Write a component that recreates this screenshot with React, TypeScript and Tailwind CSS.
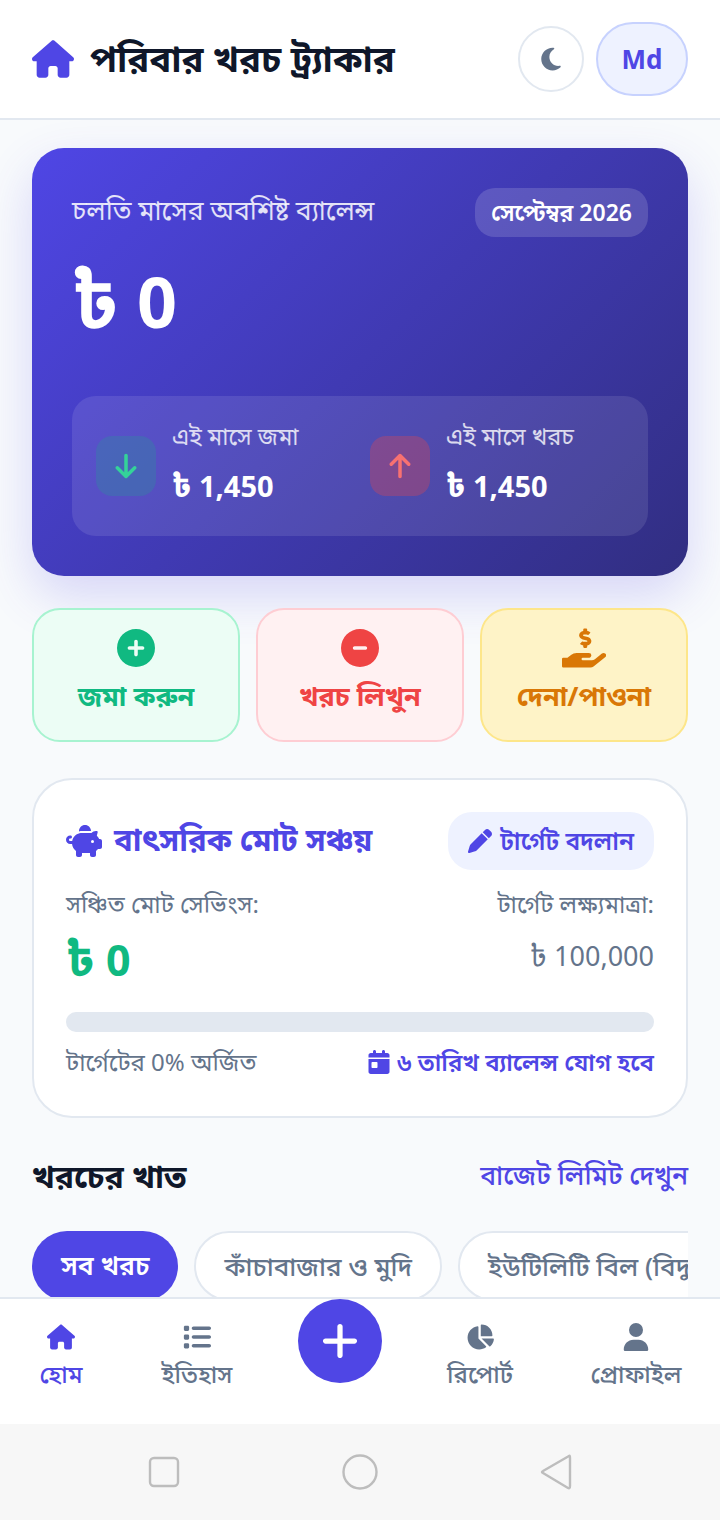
import React from "react";
import {
  FaHouse, FaMoon, FaArrowDown, FaArrowUp, FaCirclePlus, FaCircleMinus,
  FaPiggyBank, FaPen, FaCalendarDay, FaList, FaChartPie, FaUser, FaPlus,
} from "react-icons/fa6";
import { FaHandHoldingUsd } from "react-icons/fa";

const font = "font-['Noto_Sans','Noto_Sans_Bengali','Noto_Serif_Bengali','Lohit_Bengali','FreeSans',sans-serif]";

function Taka() {
  return <span className="text-[1.1em] leading-none">৳</span>;
}

function Stat({ label, tile, icon }: { label: string; tile: string; icon: React.ReactNode }) {
  return (
    <div className="flex items-center gap-4">
      <div className={`flex h-[60px] w-[60px] items-center justify-center rounded-2xl text-[28px] ${tile}`}>{icon}</div>
      <div className="-mt-[6px] flex flex-col">
        <span className="text-[23.5px] leading-[36px] text-white/80">{label}</span>
        <span className="mt-[10px] text-[29px] font-bold leading-[44px] text-white"><Taka /> 1,450</span>
      </div>
    </div>
  );
}

function Action({ box, color, icon, label }: { box: string; color: string; icon: React.ReactNode; label: string }) {
  return (
    <div className={`flex h-[134px] flex-col items-center justify-center gap-[9px] rounded-[28px] border-2 pb-[6px] ${box}`}>
      <div className={`flex h-[38px] items-center text-[38px] leading-none ${color}`}>{icon}</div>
      <span className={`text-[27px] font-bold leading-[40px] ${color}`}>{label}</span>
    </div>
  );
}

function NavItem({ icon, label, active }: { icon: React.ReactNode; label: string; active?: boolean }) {
  const c = active ? "text-[#4f46e5]" : "text-[#64748b]";
  return (
    <div className={`flex flex-col items-center gap-[5px] pt-[24px] ${c}`}>
      <div className="text-[28px] leading-none">{icon}</div>
      <span className="text-[24px] font-medium leading-[36px]">{label}</span>
    </div>
  );
}

export default function App() {
  return (
    <div className={`flex h-[1520px] w-[720px] flex-col overflow-hidden bg-[#f8fafc] ${font}`}>
      <header className="flex h-[120px] shrink-0 items-center justify-between border-b-2 border-[#e2e8f0] bg-white px-[32px]">
        <div className="flex items-center gap-[16px]">
          <FaHouse className="text-[42px] text-[#4f46e5]" />
          <h1 className="-mt-[2px] text-[36.5px] font-bold leading-[48px] text-[#0f172a]">পরিবার খরচ ট্র্যাকার</h1>
        </div>
        <div className="flex items-center gap-[12px]">
          <div className="flex h-[66px] w-[66px] items-center justify-center rounded-full border-2 border-[#e2e8f0] bg-white text-[26px] text-[#64748b]">
            <FaMoon />
          </div>
          <div className="flex h-[74px] w-[92px] items-center justify-center rounded-full border-2 border-[#c7d2fe] bg-[#eef2ff] text-[26px] font-bold text-[#4f46e5]">
            Md
          </div>
        </div>
      </header>

      <main className="flex min-h-0 flex-1 flex-col overflow-hidden px-[32px] pt-[28px]">
        <section className="flex h-[428px] shrink-0 flex-col rounded-[32px] bg-[linear-gradient(135deg,#4f46e5,#312e81)] p-[40px] shadow-[0_20px_50px_rgba(79,70,229,0.2)]">
          <div className="flex items-center justify-between">
            <span className="-mt-[6px] text-[26.5px] leading-[40px] text-white/85">চলতি মাসের অবশিষ্ট ব্যালেন্স</span>
            <span className="flex h-[49px] items-center rounded-[20px] bg-white/15 px-[16px] text-[23px] font-semibold text-white">সেপ্টেম্বর 2026</span>
          </div>
          <div className="mt-[20px] text-[70px] font-bold leading-[88px] text-white"><Taka /> 0</div>
          <div className="mt-auto grid h-[140px] grid-cols-2 items-center gap-[20px] rounded-[24px] bg-white/10 px-[24px]">
            <Stat label="এই মাসে জমা" tile="bg-[#10b981]/20 text-[#34d399]" icon={<FaArrowDown />} />
            <Stat label="এই মাসে খরচ" tile="bg-[#ef4444]/30 text-[#f87171]" icon={<FaArrowUp />} />
          </div>
        </section>

        <section className="mt-[32px] grid shrink-0 grid-cols-3 gap-[16px]">
          <Action box="border-[#a7f3d0] bg-[#ecfdf5]" color="text-[#10b981]" icon={<FaCirclePlus />} label="জমা করুন" />
          <Action box="border-[#fecdd3] bg-[#fff1f2]" color="text-[#ef4444]" icon={<FaCircleMinus />} label="খরচ লিখুন" />
          <Action box="border-[#fde68a] bg-[#fef3c7]" color="text-[#d97706]" icon={<FaHandHoldingUsd className="text-[44px]" />} label="দেনা/পাওনা" />
        </section>

        <section className="mt-[36px] flex h-[340px] shrink-0 flex-col rounded-[40px] border-2 border-[#e2e8f0] bg-white px-[32px] pt-[32px]">
          <div className="flex items-center justify-between">
            <div className="flex items-center gap-[12px] text-[#4f46e5]">
              <FaPiggyBank className="text-[36px]" />
              <span className="-mt-[4px] text-[31px] font-bold leading-[44px]">বাৎসরিক মোট সঞ্চয়</span>
            </div>
            <div className="flex h-[58px] items-center gap-[8px] rounded-[24px] bg-[#eef2ff] px-[20px] text-[#4f46e5]">
              <FaPen className="text-[24px]" />
              <span className="text-[24.5px] font-semibold">টার্গেট বদলান</span>
            </div>
          </div>
          <div className="mt-[16px] flex justify-between text-[24px] leading-[36px] text-[#64748b]">
            <span>সঞ্চিত মোট সেভিংস:</span>
            <span>টার্গেট লক্ষ্যমাত্রা:</span>
          </div>
          <div className="mt-[10px] flex items-start justify-between">
            <span className="text-[43px] font-bold leading-[56px] text-[#10b981]"><Taka /> 0</span>
            <span className="text-[27px] leading-[48px] text-[#64748b]"><Taka /> 100,000</span>
          </div>
          <div className="mt-[24px] h-[20px] rounded-[10px] bg-[#e2e8f0]" />
          <div className="mt-[12px] flex items-center justify-between text-[24px] leading-[36px]">
            <span className="text-[#64748b]">টার্গেটের 0% অর্জিত</span>
            <span className="flex items-center gap-[6px] font-semibold text-[#4f46e5]">
              <FaCalendarDay className="text-[24px]" />
              ৬ তারিখ ব্যালেন্স যোগ হবে
            </span>
          </div>
        </section>

        <div className="mt-[36px] flex shrink-0 items-center justify-between">
          <h2 className="text-[32px] font-bold leading-[44px] text-[#0f172a]">খরচের খাত</h2>
          <span className="text-[26.5px] font-medium text-[#4f46e5]">বাজেট লিমিট দেখুন</span>
        </div>

        <div className="mt-[33px] flex shrink-0 gap-[16px] overflow-hidden">
          <span className="flex h-[70px] shrink-0 items-center rounded-full bg-[#4f46e5] px-[29px] text-[26.5px] font-semibold text-white">সব খরচ</span>
          <span className="flex h-[70px] shrink-0 items-center rounded-full border-2 border-[#e2e8f0] bg-white px-[28px] text-[26px] font-medium text-[#64748b]">কাঁচাবাজার ও মুদি</span>
          <span className="flex h-[70px] shrink-0 items-center rounded-full border-2 border-[#e2e8f0] bg-white px-[28px] text-[26px] font-medium text-[#64748b]">ইউটিলিটি বিল (বিদ্যুৎ, পানি)</span>
        </div>
      </main>

      <nav className="grid h-[127px] shrink-0 grid-cols-[122px_150px_136px_144px_168px] border-t-2 border-[#e2e8f0] bg-white">
        <NavItem active icon={<FaHouse />} label="হোম" />
        <NavItem icon={<FaList />} label="ইতিহাস" />
        <div className="flex justify-center">
          <div className="flex h-[84px] w-[84px] items-center justify-center rounded-full bg-[#4f46e5] text-[42px] text-white">
            <FaPlus />
          </div>
        </div>
        <NavItem icon={<FaChartPie />} label="রিপোর্ট" />
        <NavItem icon={<FaUser />} label="প্রোফাইল" />
      </nav>

      <div className="flex h-[96px] shrink-0 items-center justify-center gap-[162px] bg-[#f7f7f7]">
        <svg width="32" height="32" viewBox="0 0 32 32" fill="none" stroke="#bdbdbd" strokeWidth="2.4"><rect x="2" y="2" width="28" height="28" rx="4" /></svg>
        <svg width="36" height="36" viewBox="0 0 36 36" fill="none" stroke="#bdbdbd" strokeWidth="2.4"><circle cx="18" cy="18" r="16.5" /></svg>
        <svg width="32" height="38" viewBox="0 0 32 38" fill="none" stroke="#bdbdbd" strokeWidth="2.4" strokeLinejoin="round"><path d="M29 3 Q30 2 30 5 L30 33 Q30 36 28 35 L3 20 Q1 19 3 18 Z" /></svg>
      </div>
    </div>
  );
}
